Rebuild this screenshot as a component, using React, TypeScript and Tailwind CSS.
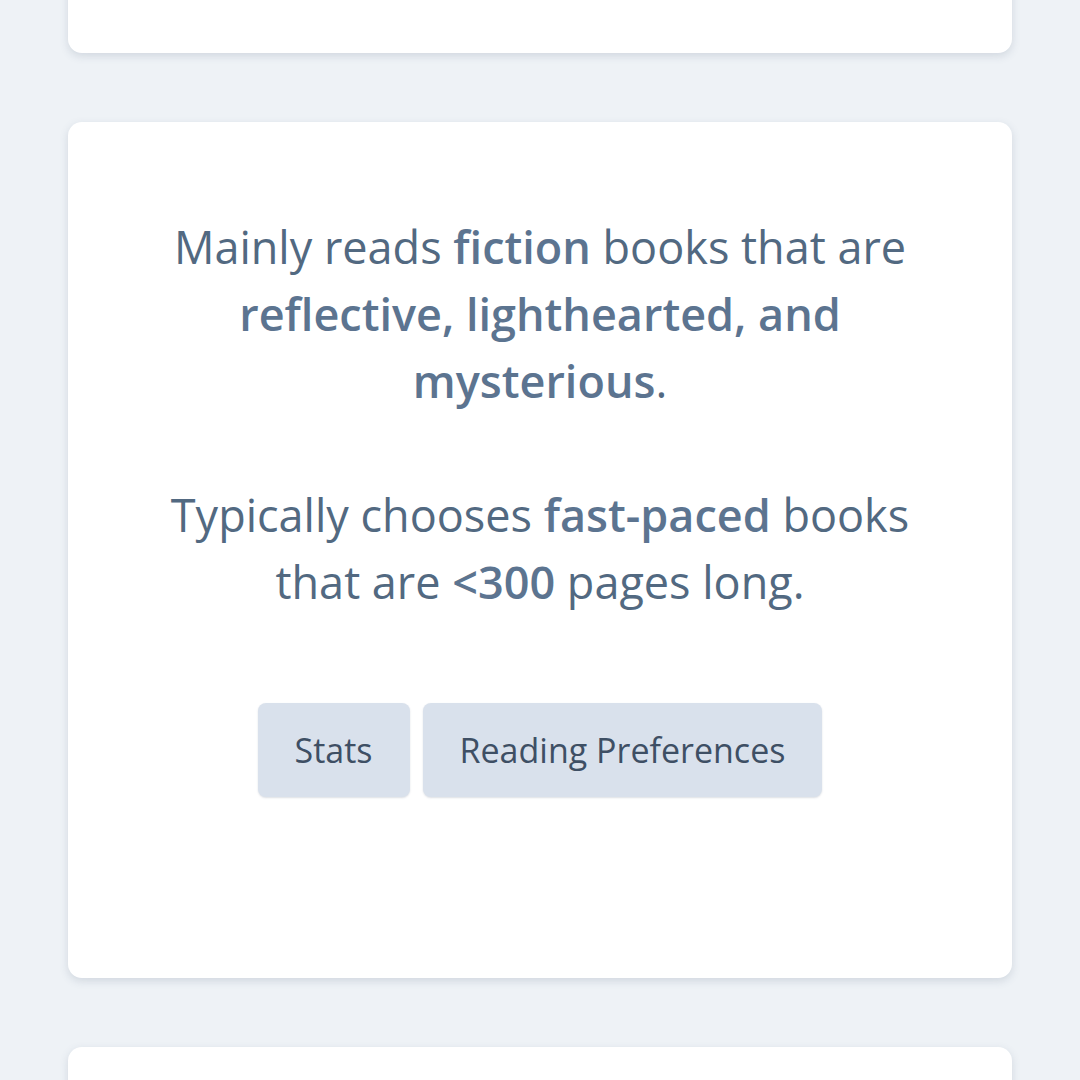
export default function App() {
  return (
    <div className="min-h-[1080px] w-[1080px] overflow-hidden bg-[#eef2f6] px-[68px]" style={{ fontFamily: '"Open Sans", "Noto Sans", sans-serif' }}>
      <div className="flex flex-col gap-[69px] -mt-[100px]">
        <div className="h-[153px] rounded-[14px] bg-white shadow-[0_3px_8px_rgba(80,95,120,0.18)]" />
        <div className="flex h-[856px] flex-col items-center rounded-[14px] bg-white pt-[91px] shadow-[0_3px_8px_rgba(80,95,120,0.18)]">
          <p className="w-[770px] text-center text-[45px] leading-[67px] text-[#526981]">
            Mainly reads <span className="font-semibold text-[#5c7490]">fiction</span> books that are{" "}
            <span className="font-semibold text-[#5c7490]">reflective, lighthearted, and mysterious</span>.
          </p>
          <p className="mt-[67px] w-[770px] text-center text-[45px] leading-[67px] text-[#526981]">
            Typically chooses <span className="font-semibold text-[#5c7490]">fast-paced</span> books that are{" "}
            <span className="font-semibold text-[#5c7490]">&lt;300</span> pages long.
          </p>
          <div className="mt-[88px] flex gap-[13px]">
            <button className="h-[94px] rounded-[8px] bg-[#d9e1ec] px-[37px] text-[34px] text-[#3e4f64] shadow-[0_1px_2px_rgba(80,95,120,0.2)]">Stats</button>
            <button className="h-[94px] rounded-[8px] bg-[#d9e1ec] px-[37px] text-[34px] text-[#3e4f64] shadow-[0_1px_2px_rgba(80,95,120,0.2)]">Reading Preferences</button>
          </div>
        </div>
        <div className="h-[200px] rounded-[14px] bg-white shadow-[0_3px_8px_rgba(80,95,120,0.18)]" />
      </div>
    </div>
  );
}
